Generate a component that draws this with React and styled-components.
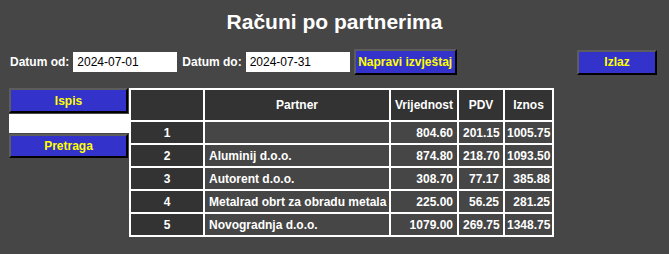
import React from "react";
import styled, { createGlobalStyle } from "styled-components";

const GlobalStyle = createGlobalStyle`
  * { box-sizing: border-box; }
  body {
    margin: 0;
    background: #464646;
    font-family: "Liberation Sans", Arial, sans-serif;
  }
`;

const Page = styled.div`
  min-height: 254px;
  padding: 10px 12px 0 9px;
  background: #464646;
  color: #fff;
`;

const Title = styled.h1`
  margin: 0;
  height: 28px;
  line-height: 24px;
  font-size: 21px;
  font-weight: bold;
  text-align: center;
  padding-left: 3px;
`;

const Toolbar = styled.div`
  display: flex;
  align-items: center;
  gap: 4px;
  margin-top: 11px;
  height: 26px;
`;

const Label = styled.span`
  font-size: 12px;
  font-weight: bold;
  margin-left: ${(p) => p.$offset || 0}px;
`;

const DateInput = styled.input`
  width: 104px;
  height: 20px;
  border: none;
  padding: 0 4px;
  font-family: "Liberation Sans", Arial, sans-serif;
  font-size: 12px;
  color: #000;
  background: #fff;
  outline: none;
`;

const Spacer = styled.div`
  flex: 1;
`;

const Button = styled.button`
  width: ${(p) => p.$width}px;
  height: ${(p) => p.$height || 25}px;
  padding: 0;
  background: #3333cc;
  color: #ffff00;
  font-family: "Liberation Sans", Arial, sans-serif;
  font-size: 12px;
  font-weight: bold;
  border: 2px solid;
  border-color: #5c5c5c #000 #000 #5c5c5c;
  cursor: pointer;
`;

const Body = styled.div`
  display: flex;
  align-items: flex-start;
  margin-top: 13px;
`;

const Sidebar = styled.div`
  width: 120px;
  display: flex;
  flex-direction: column;
  gap: 1px;
`;

const SearchInput = styled.input`
  width: 120px;
  height: 19px;
  border: none;
  background: #fff;
  outline: none;
`;

const Table = styled.table`
  width: 425px;
  table-layout: fixed;
  border-collapse: separate;
  border-spacing: 2px;
  background: #fff;
  font-size: 12px;
  font-weight: bold;
`;

const Th = styled.th`
  height: 30px;
  padding: 0 2px;
  background: #333333;
  color: #fff;
  text-align: center;
`;

const Cell = styled.td`
  height: 21px;
  padding: 0 ${(p) => (p.$tight ? 2 : 4)}px;
  background: ${(p) => (p.$index ? "#333333" : "#464646")};
  color: #fff;
  text-align: ${(p) => p.$align || "left"};
  white-space: nowrap;
`;

const columns = [72, 184, 66, 44, 47];

const rows = [
  ["1", "", "804.60", "201.15", "1005.75"],
  ["2", "Aluminij d.o.o.", "874.80", "218.70", "1093.50"],
  ["3", "Autorent d.o.o.", "308.70", "77.17", "385.88"],
  ["4", "Metalrad obrt za obradu metala", "225.00", "56.25", "281.25"],
  ["5", "Novogradnja d.o.o.", "1079.00", "269.75", "1348.75"],
];

export default function App() {
  return (
    <>
      <GlobalStyle />
      <Page>
        <Title>Računi po partnerima</Title>
        <Toolbar>
          <Label $offset={1}>Datum od:</Label>
          <DateInput defaultValue="2024-07-01" />
          <Label $offset={1}>Datum do:</Label>
          <DateInput defaultValue="2024-07-31" />
          <Button $width={103} $height={26}>Napravi izvještaj</Button>
          <Spacer />
          <Button $width={80}>Izlaz</Button>
        </Toolbar>
        <Body>
          <Sidebar>
            <Button $width={119}>Ispis</Button>
            <SearchInput />
            <Button $width={119} $height={24}>Pretraga</Button>
          </Sidebar>
          <Table>
            <colgroup>
              {columns.map((w, i) => (
                <col key={i} style={{ width: w }} />
              ))}
            </colgroup>
            <thead>
              <tr>
                <Th></Th>
                <Th>Partner</Th>
                <Th>Vrijednost</Th>
                <Th>PDV</Th>
                <Th>Iznos</Th>
              </tr>
            </thead>
            <tbody>
              {rows.map((r) => (
                <tr key={r[0]}>
                  <Cell $index $align="center">{r[0]}</Cell>
                  <Cell>{r[1]}</Cell>
                  <Cell $align="right">{r[2]}</Cell>
                  <Cell $align="right">{r[3]}</Cell>
                  <Cell $align="right" $tight>{r[4]}</Cell>
                </tr>
              ))}
            </tbody>
          </Table>
        </Body>
      </Page>
    </>
  );
}
